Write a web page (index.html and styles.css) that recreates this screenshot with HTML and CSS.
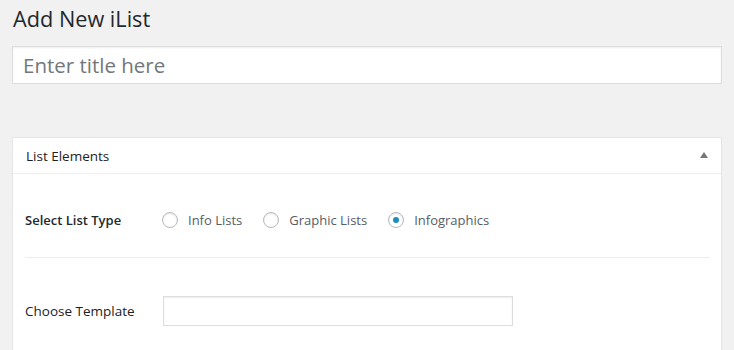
FILE: index.html
```html
<!DOCTYPE html>
<html lang="en">
<head>
    <meta charset="UTF-8">
    <meta name="viewport" content="width=device-width, initial-scale=1.0">
    <title>Add New iList</title>
    <link rel="stylesheet" href="styles.css">
</head>
<body>
    <div class="wrap">
        <h1>Add New iList</h1>
        <input class="title-input" type="text" placeholder="Enter title here">

        <div class="postbox">
            <div class="postbox-header">
                <h2>List Elements</h2>
                <span class="toggle"></span>
            </div>
            <div class="inside">
                <div class="row row-type">
                    <span class="row-label">Select List Type</span>
                    <div class="radios">
                        <label><input type="radio" name="type"> Info Lists</label>
                        <label><input type="radio" name="type"> Graphic Lists</label>
                        <label><input type="radio" name="type" checked> Infographics</label>
                    </div>
                </div>
                <div class="row row-template">
                    <span class="row-label plain">Choose Template</span>
                    <input class="template-input" type="text">
                </div>
            </div>
        </div>
    </div>
</body>
</html>
```

FILE: styles.css
```css
body {
    margin: 0;
    background: #f1f1f1;
    color: #23282d;
    font-family: "Open Sans", sans-serif;
    font-size: 13px;
}

.wrap {
    padding: 0 12px;
}

h1 {
    margin: 0;
    padding: 3px 0 0 1px;
    font-size: 21.7px;
    font-weight: 400;
    line-height: 32px;
}

.title-input {
    display: block;
    box-sizing: border-box;
    width: 710px;
    height: 38px;
    margin-top: 11px;
    padding: 0 10px;
    border: 1px solid #ddd;
    box-shadow: inset 0 1px 2px rgba(0, 0, 0, .07);
    background: #fff;
    font-family: inherit;
    font-size: 20.5px;
    outline: none;
}

.title-input::placeholder {
    color: #72777c;
}

.postbox {
    margin-top: 53px;
    width: 710px;
    box-sizing: border-box;
    background: #fff;
    border: 1px solid #e5e5e5;
    height: 220px;
}

.postbox-header {
    display: flex;
    align-items: center;
    justify-content: space-between;
    height: 35px;
    padding: 0 13px 0 13px;
    border-bottom: 1px solid #eee;
}

.postbox-header h2 {
    margin: 0;
    font-size: 13.5px;
    font-weight: 500;
    color: #1d2125;
}

.toggle {
    width: 0;
    height: 0;
    border-left: 4px solid transparent;
    border-right: 4px solid transparent;
    border-bottom: 6px solid #72777c;
    margin-top: -1px;
}

.inside {
    padding: 0 11px 0 12px;
}

.row {
    display: flex;
    align-items: center;
}

.row-type {
    padding: 36px 0 27px;
    height: 20px;
    border-bottom: 1px solid #eee;
}

.row-template {
    padding-top: 38px;
}

.row-label {
    width: 137px;
    flex: none;
    font-weight: 600;
}

.row-label.plain {
    font-weight: 500;
    font-size: 13.5px;
    color: #1d2125;
}

.radios {
    display: flex;
    gap: 21px;
    color: #555d66;
}

.radios label {
    display: flex;
    align-items: center;
}

.radios input {
    appearance: none;
    box-sizing: border-box;
    width: 16px;
    height: 16px;
    margin: 0 10px 0 0;
    border: 1px solid #b4b9be;
    border-radius: 50%;
    box-shadow: inset 0 1px 2px rgba(0, 0, 0, .1);
    background: #fff;
    display: grid;
    place-content: center;
}

.radios input:checked::before {
    content: "";
    width: 6px;
    height: 6px;
    border-radius: 50%;
    background: #1e8cbe;
}

.template-input {
    box-sizing: border-box;
    width: 350px;
    height: 30px;
    margin-left: 1px;
    border: 1px solid #ddd;
    box-shadow: inset 0 1px 2px rgba(0, 0, 0, .07);
    background: #fff;
    outline: none;
}
```
